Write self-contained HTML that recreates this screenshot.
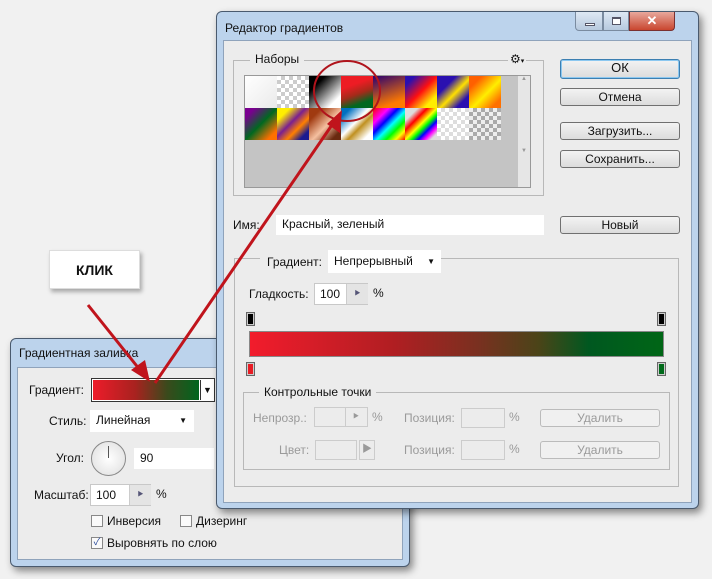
<!DOCTYPE html>
<html><head><meta charset="utf-8"><style>
*{margin:0;padding:0;box-sizing:border-box}
body{width:712px;height:579px;background:#f1f1f1;position:relative;overflow:hidden;font-family:"Liberation Sans","Noto Sans CJK SC",sans-serif;font-size:12px;color:#111}
.a{position:absolute}
.win{position:absolute;background:#bcd3ec;border:1px solid #4a5a6e;border-radius:6px;box-shadow:3px 4px 8px rgba(0,0,0,.45)}
.client{position:absolute;background:#ececec;border:1px solid #8fa3bb}
.btn{position:absolute;border:1px solid #707070;border-radius:3px;background:linear-gradient(#f3f3f3,#dcdcdc);text-align:center;font-size:12px;line-height:16px}
.inp{position:absolute;background:#fff;border:1px solid #c8c8c8}
.dis{color:#9a9a9a}
.grp{position:absolute;border:1px solid #b8b8b8}
.sw{position:absolute;width:32px;height:32px}
</style></head><body>

<!-- KЛИК box -->
<div class="a" style="left:49px;top:250px;width:91px;height:39px;background:#fff;border:1px solid #ddd;box-shadow:2px 3px 4px rgba(0,0,0,.3);font-weight:bold;font-size:14px;text-align:center;line-height:38px">КЛИК</div>

<!-- Small dialog -->
<div class="win" style="left:10px;top:338px;width:400px;height:229px">
 <div class="a" style="left:8px;top:7px;font-size:12px">Градиентная заливка</div>
 <div class="client" style="left:6px;top:28px;width:386px;height:193px"></div>
</div>
<div class="a" style="left:29px;top:383px">Градиент:</div>
<div class="a" style="left:91px;top:378px;width:124px;height:24px;border:1px solid #333;background:#fff"></div>
<div class="a" style="left:93px;top:380px;width:106px;height:20px;background:linear-gradient(90deg,#ed1c2a,#a8221f 40%,#3a4a1c 70%,#00651e)"></div>
<div class="a" style="left:200px;top:380px;width:14px;height:20px;border-left:1px solid #333;font-size:9px;text-align:center;line-height:20px">▼</div>
<div class="a" style="left:49px;top:414px">Стиль:</div>
<div class="inp" style="left:90px;top:410px;width:104px;height:22px;border:none;padding:3px 6px">Линейная<span style="position:absolute;right:7px;font-size:8px;top:6px">▼</span></div>
<div class="a" style="left:56px;top:451px">Угол:</div>
<div class="a" style="left:91px;top:441px;width:35px;height:35px;border:1px solid #888;border-radius:50%;background:radial-gradient(#fff,#ddd)"><div class="a" style="left:16px;top:4px;width:1px;height:12px;background:#555"></div></div>
<div class="inp" style="left:134px;top:448px;width:80px;height:21px;border:none;padding:3px 6px">90</div>
<div class="a" style="left:34px;top:488px">Масштаб:</div>
<div class="inp" style="left:90px;top:484px;width:61px;height:22px;padding:3px 5px">100<div class="a" style="left:38px;top:0;width:22px;height:20px;background:#e4e4e4;border-left:1px solid #ccc;font-size:6px;text-align:center;line-height:20px;color:#557">▶</div></div>
<div class="a" style="left:156px;top:487px">%</div>
<div class="a" style="left:91px;top:515px;width:12px;height:12px;border:1px solid #888;background:#fafafa"></div>
<div class="a" style="left:107px;top:514px">Инверсия</div>
<div class="a" style="left:180px;top:515px;width:12px;height:12px;border:1px solid #888;background:#fafafa"></div>
<div class="a" style="left:196px;top:514px">Дизеринг</div>
<div class="a" style="left:91px;top:537px;width:12px;height:12px;border:1px solid #888;background:#fafafa;font-size:10px;line-height:10px;color:#2a4a9a;text-align:center">✓</div>
<div class="a" style="left:107px;top:536px">Выровнять по слою</div>

<!-- Main dialog -->
<div class="win" style="left:216px;top:11px;width:483px;height:498px">
 <div class="a" style="left:8px;top:9px;font-size:12px">Редактор градиентов</div>
 <div class="a" style="left:358px;top:0;width:28px;height:19px;border:1px solid #7a8ba0;border-top:none;border-radius:0 0 0 4px;background:linear-gradient(#dde8f4,#b7c9de)"><div class="a" style="left:9px;top:11px;width:10px;height:3px;border:1px solid #556;background:#fff"></div></div>
 <div class="a" style="left:386px;top:0;width:26px;height:19px;border:1px solid #7a8ba0;border-top:none;background:linear-gradient(#dde8f4,#b7c9de)"><div class="a" style="left:8px;top:5px;width:9px;height:8px;border:1px solid #556;border-top-width:2px;background:#fff"></div></div>
 <div class="a" style="left:412px;top:0;width:46px;height:19px;border:1px solid #7a3030;border-top:none;border-radius:0 0 4px 0;background:linear-gradient(#e8a89c,#c9462f);color:#fff;font-weight:bold;text-align:center;line-height:17px;font-size:13px">✕</div>
 <div class="client" style="left:6px;top:28px;width:469px;height:463px"></div>
</div>

<div class="grp" style="left:233px;top:60px;width:311px;height:136px"></div>
<div class="a" style="left:250px;top:52px;background:#ececec;padding:0 5px">Наборы</div>
<div class="a" style="left:508px;top:52px;background:#ececec;padding:0 2px;font-size:12px">⚙<span style="font-size:7px">▾</span></div>
<div class="a" style="left:244px;top:75px;width:287px;height:113px;background:#c4c4c4;border:1px solid #999"></div>
<div class="a" style="left:518px;top:76px;width:12px;height:111px;background:#e6e6e6;color:#999;font-size:6px;text-align:center">▲<br><br><br><br><br><br><br><br><br><br><br><br>▼</div>
<div class="sw" style="left:245px;top:76px;background:linear-gradient(135deg,#fff,#eaeaea)"></div>
<div class="sw" style="left:277px;top:76px;background:repeating-conic-gradient(#ccc 0 25%,#fff 0 50%) 0 0/8px 8px"></div>
<div class="sw" style="left:309px;top:76px;background:linear-gradient(135deg,#000 25%,#fff 80%)"></div>
<div class="sw" style="left:341px;top:76px;background:linear-gradient(160deg,#ed1c24 30%,#a52a1a 55%,#006820 80%)"></div>
<div class="sw" style="left:373px;top:76px;background:linear-gradient(160deg,#2a0070,#ff7a00 80%)"></div>
<div class="sw" style="left:405px;top:76px;background:linear-gradient(135deg,#2a10b0 15%,#ff1010 50%,#ffee00 80%)"></div>
<div class="sw" style="left:437px;top:76px;background:linear-gradient(135deg,#2a10b0 30%,#ffe000 55%,#2a10b0 80%)"></div>
<div class="sw" style="left:469px;top:76px;background:linear-gradient(135deg,#ff6000 20%,#ffee00 55%,#ff7000 85%)"></div>
<div class="sw" style="left:245px;top:108px;background:linear-gradient(135deg,#7a0090 15%,#006820 50%,#ff7000 85%)"></div>
<div class="sw" style="left:277px;top:108px;background:linear-gradient(135deg,#ffee00 20%,#7a2090 45%,#ff8000 65%,#1a1a90 85%)"></div>
<div class="sw" style="left:309px;top:108px;background:linear-gradient(135deg,#a03a10 20%,#f5c0a0 55%,#6a2a10 85%)"></div>
<div class="sw" style="left:341px;top:108px;background:linear-gradient(135deg,#0070c0 15%,#fff 45%,#c09020 60%,#fff 85%)"></div>
<div class="sw" style="left:373px;top:108px;background:linear-gradient(135deg,#ff0000,#ff00ff 25%,#0000ff 40%,#00ffff 55%,#00ff00 70%,#ffff00 85%,#ff0000)"></div>
<div class="sw" style="left:405px;top:108px;background:linear-gradient(135deg,#ddd 20%,#ff0000 35%,#ffff00 50%,#00ff00 60%,#0000ff 70%,#ff00ff 80%,#ddd 90%)"></div>
<div class="sw" style="left:437px;top:108px;background:repeating-conic-gradient(#ddd 0 25%,#fff 0 50%) 0 0/8px 8px"></div>
<div class="sw" style="left:469px;top:108px;background:repeating-conic-gradient(#aaa 0 25%,#eee 0 50%) 0 0/8px 8px"></div>

<div class="btn" style="left:560px;top:59px;width:120px;height:20px;border-color:#3c7fb1;box-shadow:0 0 0 1px #8cc8f0 inset;font-size:13px">ОК</div>
<div class="btn" style="left:560px;top:88px;width:120px;height:18px">Отмена</div>
<div class="btn" style="left:560px;top:122px;width:120px;height:18px">Загрузить...</div>
<div class="btn" style="left:560px;top:150px;width:120px;height:18px">Сохранить...</div>

<div class="a" style="left:233px;top:218px">Имя:</div>
<div class="inp" style="left:276px;top:215px;width:268px;height:20px;border:none;padding:2px 6px">Красный, зеленый</div>
<div class="btn" style="left:560px;top:216px;width:120px;height:18px">Новый</div>

<div class="grp" style="left:234px;top:258px;width:445px;height:229px"></div>
<div class="a" style="left:260px;top:250px;width:180px;height:24px;background:#ececec"></div>
<div class="a" style="left:267px;top:255px">Градиент:</div>
<div class="inp" style="left:328px;top:250px;width:113px;height:23px;border:none;padding:4px 6px">Непрерывный<span style="position:absolute;right:6px;font-size:8px;top:7px">▼</span></div>
<div class="a" style="left:249px;top:287px">Гладкость:</div>
<div class="inp" style="left:314px;top:283px;width:54px;height:22px;padding:3px 5px">100<div class="a" style="left:31px;top:0;width:22px;height:20px;background:#e4e4e4;border-left:1px solid #ccc;font-size:6px;text-align:center;line-height:20px;color:#557">▶</div></div>
<div class="a" style="left:373px;top:286px">%</div>

<div class="a" style="left:246px;top:312px;width:9px;height:14px;border:1px solid #666;background:#000;box-shadow:inset 0 0 0 1px #ccc"></div>
<div class="a" style="left:657px;top:312px;width:9px;height:14px;border:1px solid #666;background:#000;box-shadow:inset 0 0 0 1px #ccc"></div>
<div class="a" style="left:249px;top:331px;width:415px;height:26px;background:linear-gradient(90deg,#f21c2c,#b01e22 35%,#7a3020 55%,#4a4418 70%,#005820 82%,#006616);border:1px solid #888"></div>
<div class="a" style="left:246px;top:362px;width:9px;height:14px;border:1px solid #666;background:#e81c24;box-shadow:inset 0 0 0 1px #ccc"></div>
<div class="a" style="left:657px;top:362px;width:9px;height:14px;border:1px solid #666;background:#006a1a;box-shadow:inset 0 0 0 1px #ccc"></div>

<div class="grp" style="left:243px;top:392px;width:427px;height:78px"></div>
<div class="a" style="left:259px;top:385px;background:#ececec;padding:0 5px">Контрольные точки</div>
<div class="a dis" style="left:253px;top:411px">Непрозр.:</div>
<div class="a" style="left:314px;top:407px;width:54px;height:20px;border:1px solid #ccc"><div class="a" style="left:30px;top:0;width:1px;height:18px;background:#ccc"></div><div class="a dis" style="left:38px;top:3px;font-size:6px">▶</div></div>
<div class="a dis" style="left:372px;top:410px">%</div>
<div class="a dis" style="left:404px;top:411px">Позиция:</div>
<div class="a" style="left:461px;top:408px;width:44px;height:20px;border:1px solid #ccc"></div>
<div class="a dis" style="left:509px;top:410px">%</div>
<div class="btn dis" style="left:540px;top:409px;width:120px;height:18px;border-color:#bbb;background:#f0f0f0">Удалить</div>
<div class="a dis" style="left:279px;top:443px">Цвет:</div>
<div class="a" style="left:315px;top:440px;width:42px;height:20px;border:1px solid #ccc"></div>
<div class="a dis" style="left:359px;top:440px;width:16px;height:20px;border:1px solid #ccc;font-size:10px;text-align:center;line-height:18px">▶</div>
<div class="a dis" style="left:404px;top:443px">Позиция:</div>
<div class="a" style="left:461px;top:440px;width:44px;height:20px;border:1px solid #ccc"></div>
<div class="a dis" style="left:509px;top:442px">%</div>
<div class="btn dis" style="left:540px;top:441px;width:120px;height:18px;border-color:#bbb;background:#f0f0f0">Удалить</div>

<!-- arrows and circle -->
<svg class="a" style="left:0;top:0" width="712" height="579">
 <ellipse cx="347" cy="91" rx="33" ry="30" fill="none" stroke="#b0141c" stroke-width="2"/>
 <line x1="88" y1="305" x2="140" y2="370" stroke="#c0141c" stroke-width="3"/>
 <polygon points="150,382 131,370 145,360" fill="#c0141c"/>
 <line x1="155" y1="383" x2="334" y2="122" stroke="#c0141c" stroke-width="3"/>
 <polygon points="342,110 340,133 327,124" fill="#c0141c"/>
</svg>
</body></html>
